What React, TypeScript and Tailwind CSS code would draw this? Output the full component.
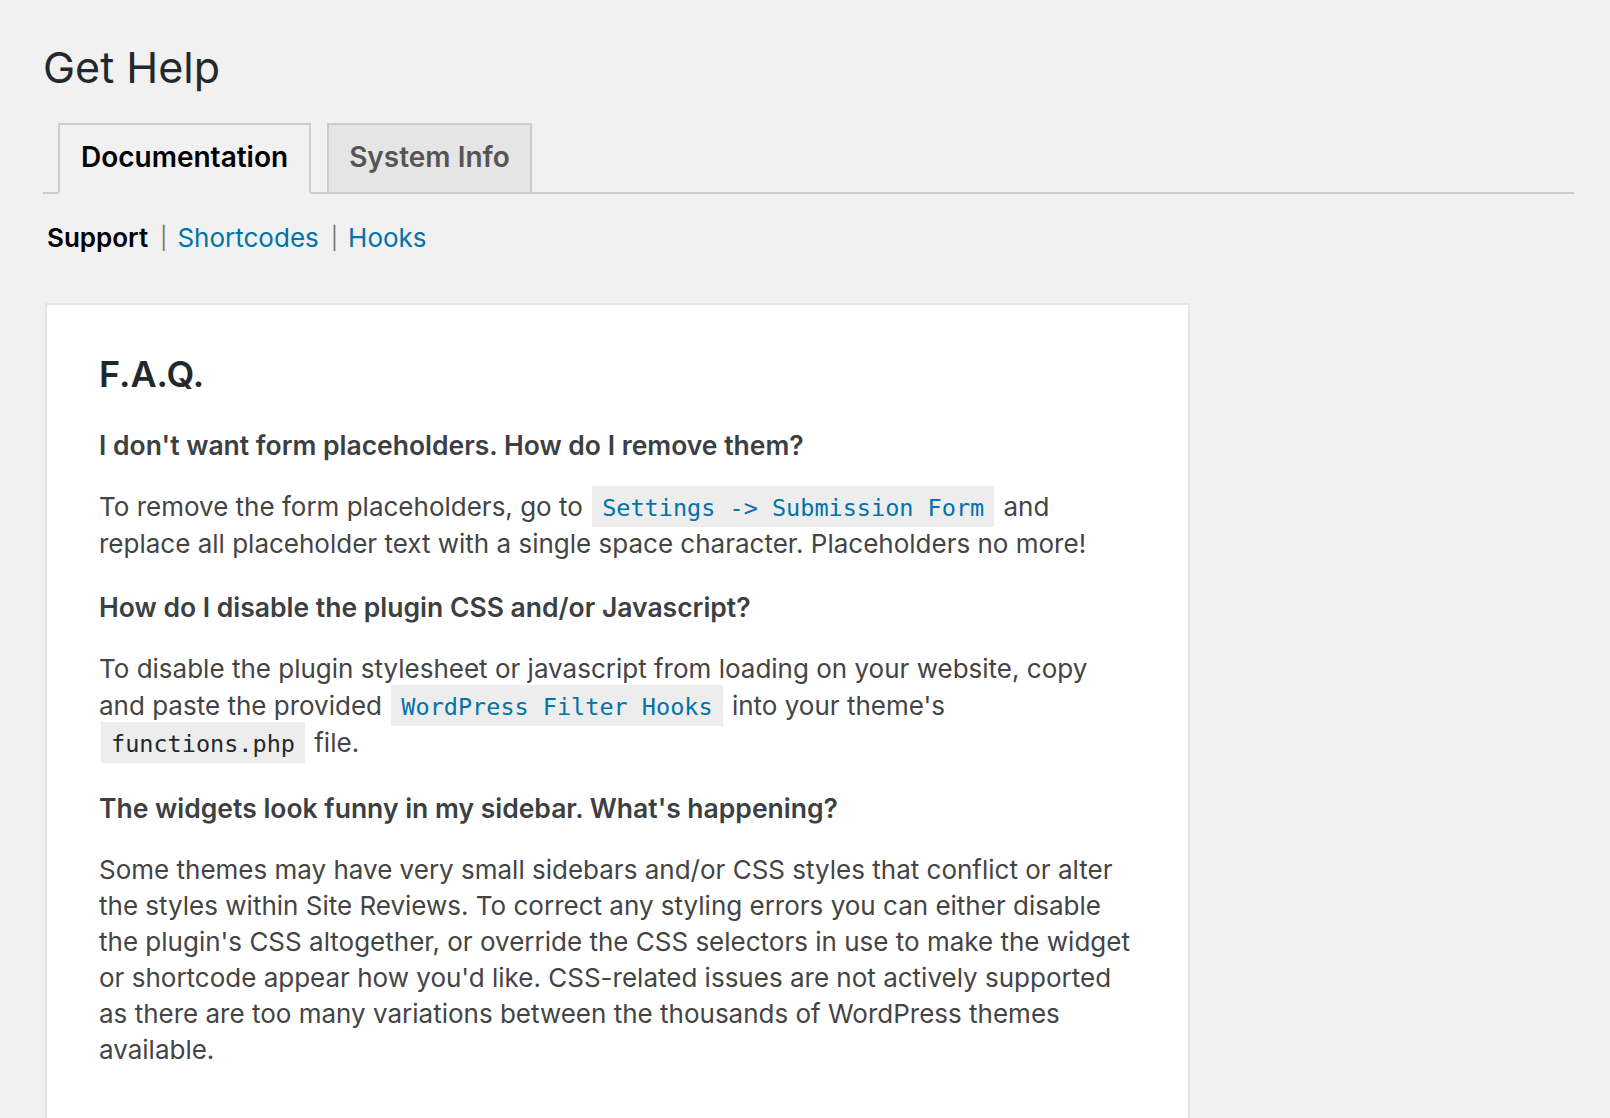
import React from 'react';

const Code: React.FC<{ link?: boolean; children: React.ReactNode }> = ({ link, children }) => (
  <code
    className={`mx-[2px] bg-[rgba(0,0,0,0.07)] px-[10px] pt-[8px] pb-[5px] font-['DejaVu_Sans_Mono',monospace] text-[23.5px] ${
      link ? 'text-[#0073aa]' : 'text-[#23282d]'
    }`}
  >
    {children}
  </code>
);

const Question: React.FC<{ children: React.ReactNode }> = ({ children }) => (
  <h3 className="mb-[26px] text-[26.5px] leading-[36px] font-semibold text-[#3c3f43]">{children}</h3>
);

const Para: React.FC<{ children: React.ReactNode; tall?: boolean }> = ({ children, tall }) => (
  <p className={`mb-[27px] text-[26px] text-[#444] ${tall ? 'leading-[36.7px]' : 'leading-[36px]'}`}>{children}</p>
);

export default function App() {
  return (
    <div className="min-h-screen bg-[#f1f1f1] pt-[39px] pl-[43px] pr-[36px] font-['Inter','Liberation_Sans',sans-serif] text-[#444]">
      <h1 className="text-[43px] leading-[56px] font-normal text-[#23282d]">Get Help</h1>

      <div className="mt-[28px] flex gap-[16px] border-b-2 border-[#ccc] pl-[15px]">
        <div className="-mb-[2px] border-2 border-[#ccc] border-b-[#f1f1f1] bg-[#f1f1f1] px-[21px] pt-[12px] pb-[15px] text-[28px] leading-[40px] font-semibold text-black">
          Documentation
        </div>
        <div className="-mb-[2px] border-2 border-[#ccc] bg-[#e5e5e5] px-[20px] pt-[12px] pb-[15px] text-[28px] leading-[40px] font-semibold text-[#555]">
          System Info
        </div>
      </div>

      <div className="mt-[26px] flex items-center pl-[4px] text-[26px] leading-[36px]">
        <span className="font-semibold text-black">Support</span>
        <span className="mr-[10px] ml-[12px] text-[22px] text-[#777]">|</span>
        <a className="text-[#0073aa]">Shortcodes</a>
        <span className="mr-[10px] ml-[12px] text-[22px] text-[#777]">|</span>
        <a className="text-[#0073aa]">Hooks</a>
      </div>

      <div className="mt-[47px] ml-[2px] w-[1145px] border-2 border-[#e5e5e5] bg-white px-[52px] pt-[47px] pb-[80px]">
        <h2 className="mb-[31px] text-[36px] leading-[44px] font-semibold text-[#23282d]">F.A.Q.</h2>

        <Question>I don't want form placeholders. How do I remove them?</Question>
        <Para>
          To remove the form placeholders, go to <Code link>Settings -&gt; Submission Form</Code> and replace all
          placeholder text with a single space character. Placeholders no more!
        </Para>

        <Question>How do I disable the plugin CSS and/or Javascript?</Question>
        <Para tall>
          To disable the plugin stylesheet or javascript from loading on your website, copy and paste the provided{' '}
          <Code link>WordPress Filter Hooks</Code> into your theme's <Code>functions.php</Code> file.
        </Para>

        <Question>The widgets look funny in my sidebar. What's happening?</Question>
        <Para>
          Some themes may have very small sidebars and/or CSS styles that conflict or alter the styles within Site
          Reviews. To correct any styling errors you can either disable the plugin's CSS altogether, or override the
          CSS selectors in use to make the widget or shortcode appear how you'd like. CSS-related issues are not
          actively supported as there are too many variations between the thousands of WordPress themes available.
        </Para>
      </div>
    </div>
  );
}
